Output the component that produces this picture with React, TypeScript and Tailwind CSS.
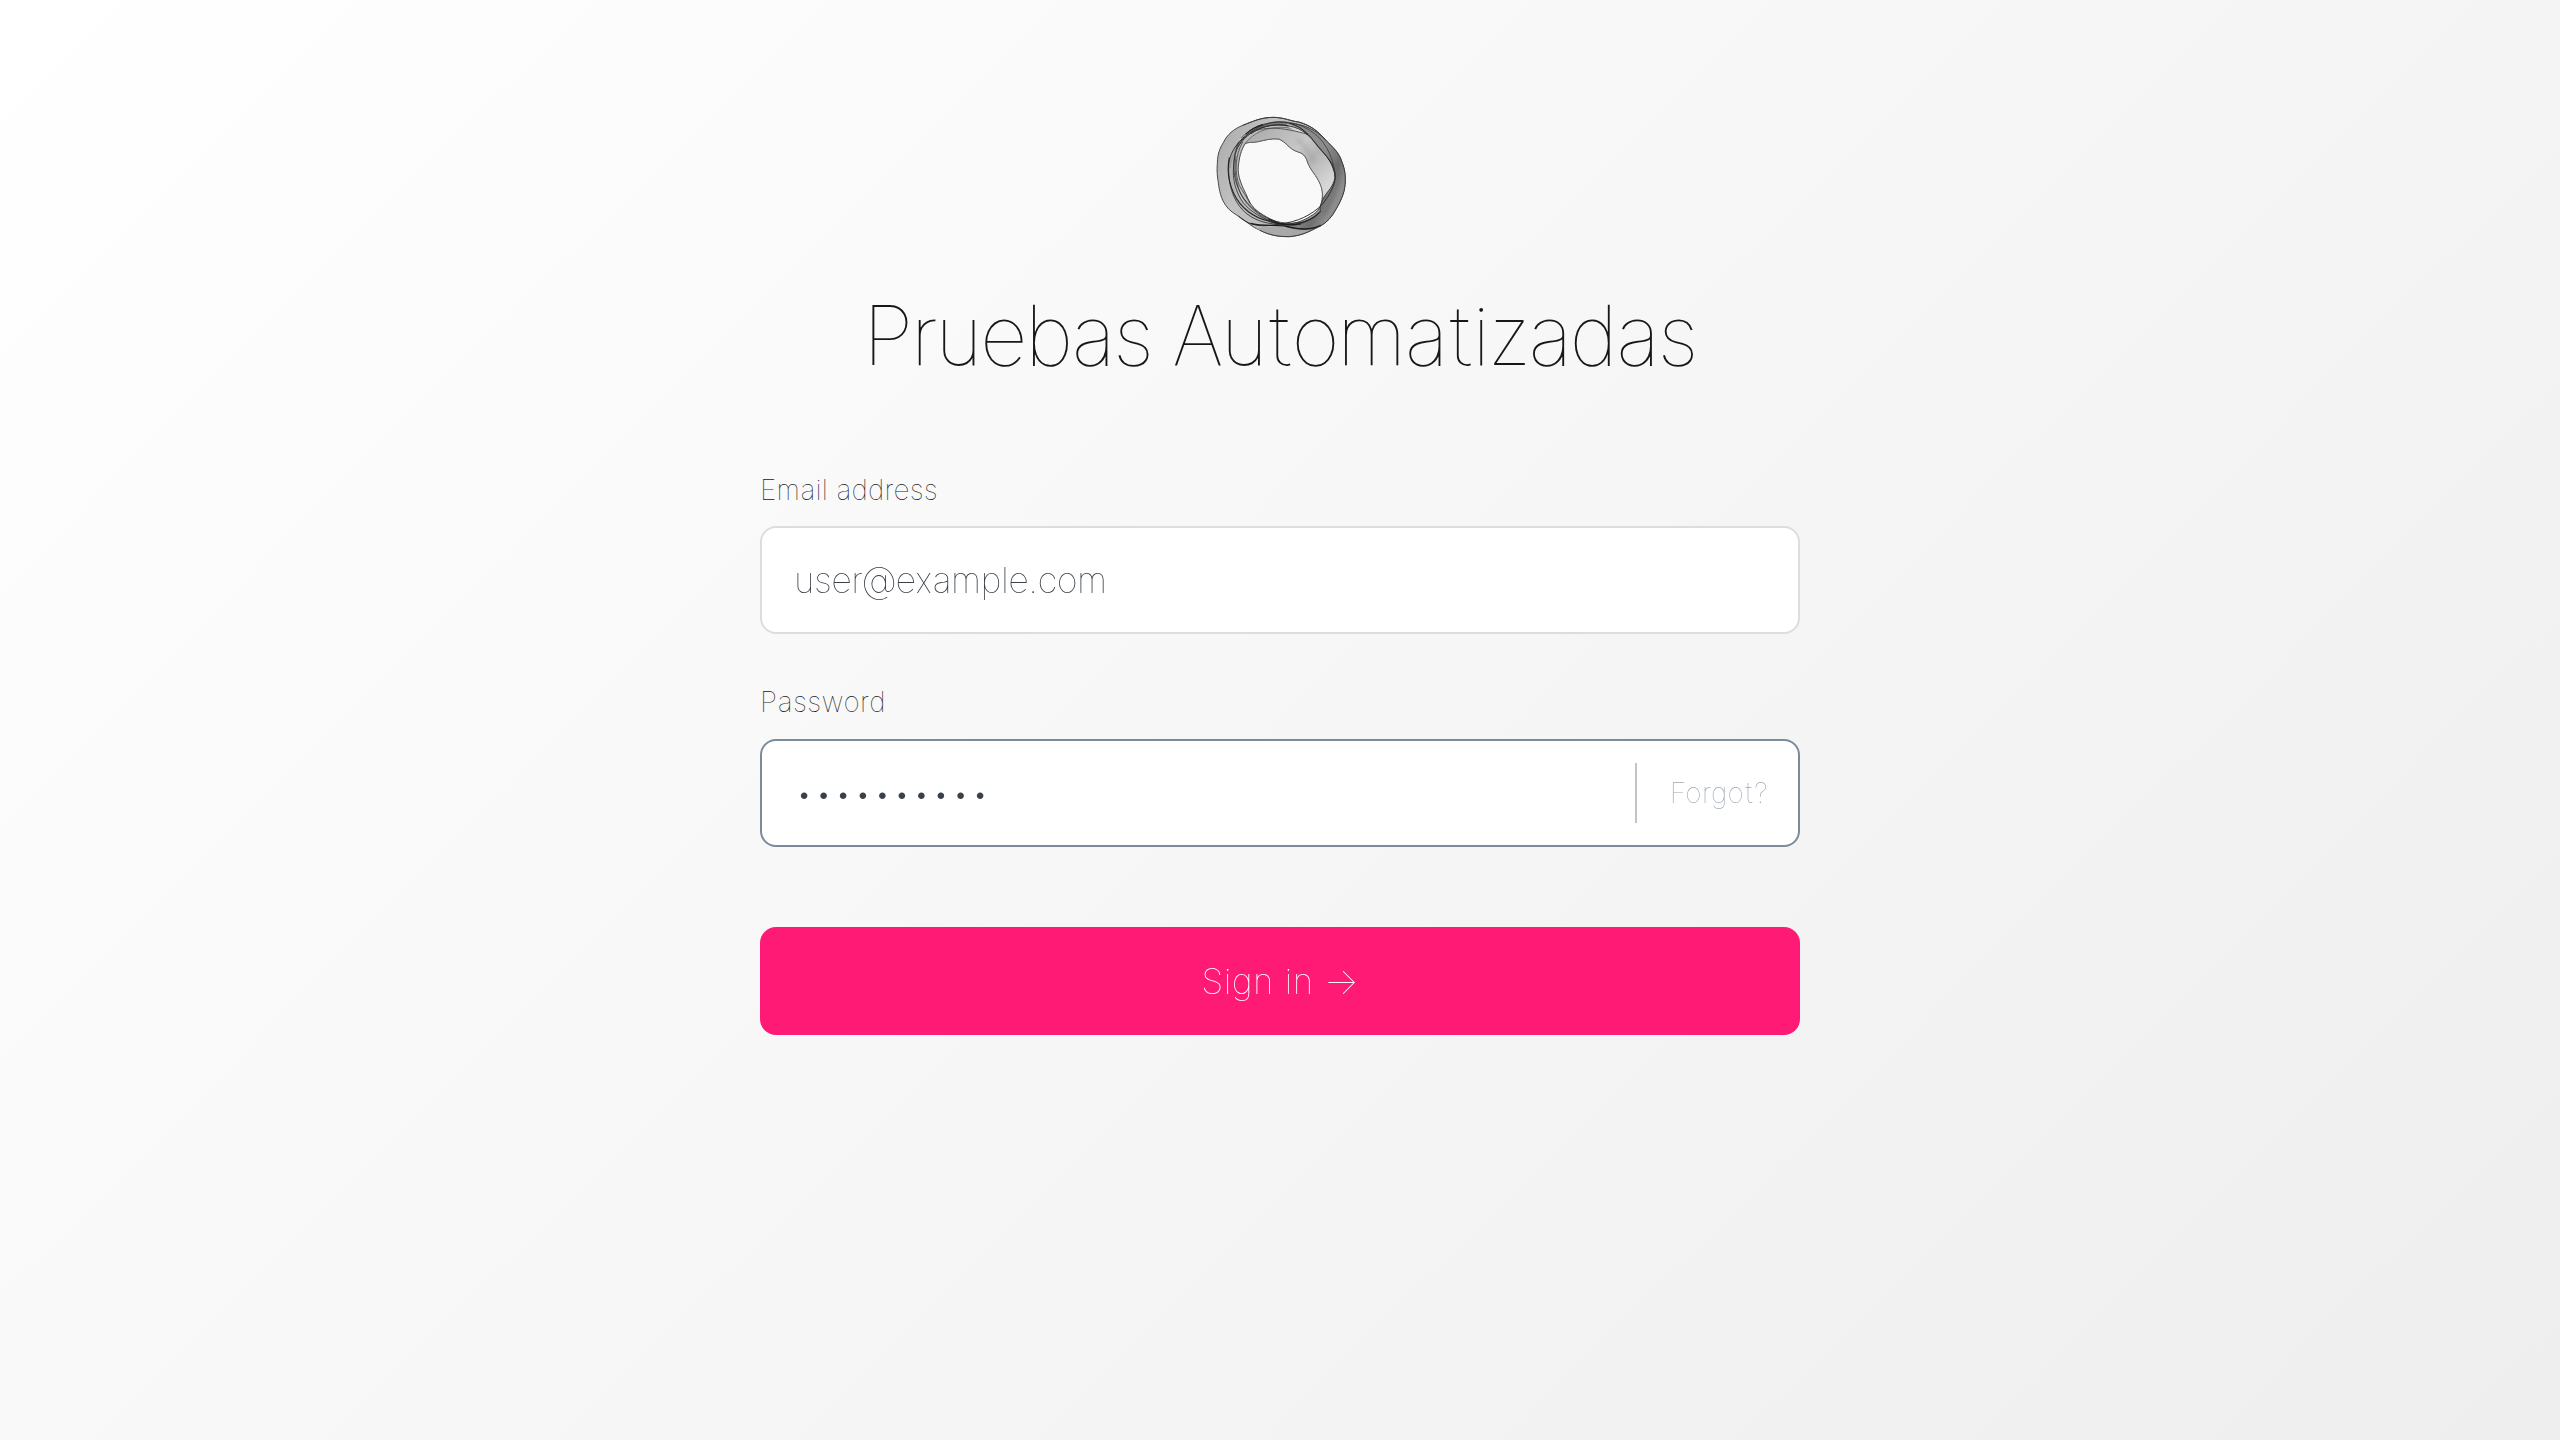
function Logo() {
  return (
    <svg className="h-[150px] w-[160px]" viewBox="0 0 480 450" fill="none">
      <defs>
        <linearGradient id="band" x1="50" y1="120" x2="440" y2="300" gradientUnits="userSpaceOnUse">
          <stop offset="0" stopColor="#adadad" />
          <stop offset=".3" stopColor="#c2c2c2" />
          <stop offset=".65" stopColor="#bbb" />
          <stop offset="1" stopColor="#808080" />
        </linearGradient>
        <linearGradient id="inner" x1="200" y1="80" x2="370" y2="260" gradientUnits="userSpaceOnUse">
          <stop offset="0" stopColor="#b0b0b0" />
          <stop offset=".45" stopColor="#c8c8c8" />
          <stop offset=".65" stopColor="#b4b4b4" />
          <stop offset="1" stopColor="#d6d6d6" />
        </linearGradient>
        <linearGradient id="right" x1="350" y1="200" x2="435" y2="240" gradientUnits="userSpaceOnUse">
          <stop offset="0" stopColor="#8c8c8c" />
          <stop offset=".6" stopColor="#6f6f6f" />
          <stop offset="1" stopColor="#8e8e8e" />
        </linearGradient>
        <filter id="soft" x="-50%" y="-50%" width="200%" height="200%">
          <feGaussianBlur stdDeviation="6" />
        </filter>
      </defs>
      <path fillRule="evenodd" fill="url(#band)" stroke="#484848" strokeWidth="3" d="M52 190C53 160 59 146 70 128C82 103 100 88 128 76C158 65 180 52 223 52C258 54 270 63 296 66C335 77 356 96 377 120C399 143 417 157 425 184C436 209 438 237 434 263C430 290 415 317 398 344C386 362 368 377 346 385C325 396 303 407 268 410C232 410 208 405 180 391C157 382 140 365 122 353C104 341 88 333 77 316C63 296 58 273 55 248C52 230 50 213 52 190ZM136 130C122 153 118 172 115 199C113 225 120 241 129 264C141 285 146 309 163 325C183 344 211 358 241 370C277 376 307 364 331 349C357 335 366 315 367 290C369 265 360 247 346 226C334 209 325 198 320 178C309 155 298 160 277 148C263 138 255 125 237 117C214 114 193 121 174 125C158 128 146 126 136 130Z" />
      <path fill="url(#inner)" stroke="#555" strokeWidth="2.2" d="M136 130C160 98 200 80 252 82C300 86 340 105 360 140C382 172 399 190 406 232C400 258 386 276 368 296C369 265 360 247 346 226C334 209 325 198 320 178C309 155 298 160 277 148C263 138 255 125 237 117C214 114 193 121 174 125C158 128 146 126 136 130Z" />
      <path d="M290 118C315 130 325 160 345 188" stroke="#999" strokeWidth="11" opacity=".45" filter="url(#soft)" />
      <path fill="url(#right)" stroke="#303030" strokeWidth="2.4" d="M270 70C315 72 350 92 377 120C399 143 417 157 425 184C436 209 438 237 434 263C430 290 415 317 398 344C386 362 368 377 346 385C318 391 285 389 255 379C303 378 342 356 361 335C358 315 370 290 390 267C408 242 409 225 397 192C376 161 354 145 333 112C315 91 294 77 270 70Z" />
      <path d="M412 185C422 230 408 285 370 345" stroke="#555" strokeWidth="9" opacity=".4" filter="url(#soft)" />
      <path fill="#6a6a6a" fillOpacity=".8" stroke="#202020" strokeWidth="2.5" d="M90 204C87 169 103 137 133 111C161 86 197 66 240 66C275 67 300 79 322 102C285 79 246 70 208 77C166 84 137 108 119 133C103 156 94 178 90 204Z" />
      <path fill="#d9d9d9" d="M260 71C278 76 300 84 320 101C306 99 281 92 266 80Z" />
      <path fill="#b3b3b3" fillOpacity=".8" stroke="#2c2c2c" strokeWidth="2.4" d="M101 197C96 238 108 276 128 306C150 335 190 358 235 373C196 371 158 360 130 332C98 300 84 250 86 198C87 166 103 137 134 110C111 136 103 165 101 197Z" />
      <path stroke="#202020" strokeWidth="3.2" d="M88 172C81 206 86 247 101 280C122 326 164 354 205 363C256 383 320 377 361 335" />
      <path stroke="#2c2c2c" strokeWidth="2.5" d="M117 125C98 166 96 216 112 258C126 297 151 323 188 347C217 365 260 376 309 366C335 358 350 346 361 335" />
      <path stroke="#383838" strokeWidth="2.2" d="M128 126C105 165 103 219 118 257C132 280 140 291 150 311M108 169C99 219 112 279 143 313C174 346 217 375 270 378" />
      <path stroke="#262626" strokeWidth="2.8" d="M116 349C153 383 197 380 240 372C292 366 336 345 367 313C389 286 405 254 406 232C404 203 388 177 365 151C338 120 318 92 284 82C240 68 190 74 153 101" />
      <path stroke="#333" strokeWidth="2.2" d="M124 114C150 84 193 67 237 65C293 64 336 90 363 119C388 150 403 187 406 231M150 98C204 75 255 85 324 103" />
      <path stroke="#1c1c1c" strokeWidth="3.5" d="M151 370C193 381 237 371 274 382C307 389 340 388 362 376M205 357C233 372 266 378 303 372M137 103C151 90 170 79 189 74" />
      <path fill="#a6a6a6" fillOpacity=".85" d="M165 383C205 382 229 377 253 384C283 391 322 392 346 386C321 400 293 407 268 409C228 410 193 400 165 383Z" />
      <path stroke="#3c3c3c" strokeWidth="2.8" d="M128 76C158 65 180 52 223 52C258 54 270 63 296 66C335 77 356 96 377 120M346 385C325 396 303 407 268 410C232 410 208 405 180 391" />
    </svg>
  );
}

export default function App() {
  return (
    <main className="flex h-[1440px] w-[2560px] flex-col items-center overflow-hidden bg-linear-[135deg,#fff,#eee] pt-[100px] font-['Inter_Tight','Inter',sans-serif] font-thin">
      <Logo />
      <h1 className="mt-[33px] pr-px text-[83px] leading-[104px] font-thin tracking-[-2.5px] whitespace-nowrap text-[#15171a] will-change-transform">
        Pruebas Automatizadas
      </h1>
      <form className="mt-[83px] flex w-[1040px] flex-col">
        <label htmlFor="email" className="h-[56px] text-[28px] leading-[40px] tracking-[0.24px] text-[#15171a]">
          Email address
        </label>
        <input
          id="email"
          type="text"
          defaultValue="user@example.com"
          className="h-[108px] rounded-2xl border-2 border-[#dddddd] bg-white px-8 text-[36px] tracking-[-0.54px] text-[#394047] outline-none will-change-transform"
        />
        <label htmlFor="password" className="mt-12 h-[57px] text-[28px] leading-[40px] tracking-[0.43px] text-[#15171a]">
          Password
        </label>
        <div className="flex h-[108px] items-center rounded-2xl border-2 border-[#7c8b9a] bg-white pr-[30px] pl-8 will-change-transform">
          <input
            id="password"
            type="password"
            defaultValue="abcdefghij"
            className="min-w-0 flex-1 bg-transparent font-['Inter',sans-serif] text-[36px] tracking-[-0.7px] text-[#394047] outline-none"
          />
          <div className="h-[60px] w-0.5 bg-[#c4c4c4]" />
          <span className="ml-8 w-[99px] text-right text-[28px] tracking-[0.37px] text-[#9ba7b3]">Forgot?</span>
        </div>
        <button
          type="button"
          className="mt-20 flex h-[108px] items-center justify-center rounded-2xl bg-[#ff1a75] text-[36px] tracking-[0.4px] text-white will-change-transform"
        >
          Sign in →
        </button>
      </form>
    </main>
  );
}
